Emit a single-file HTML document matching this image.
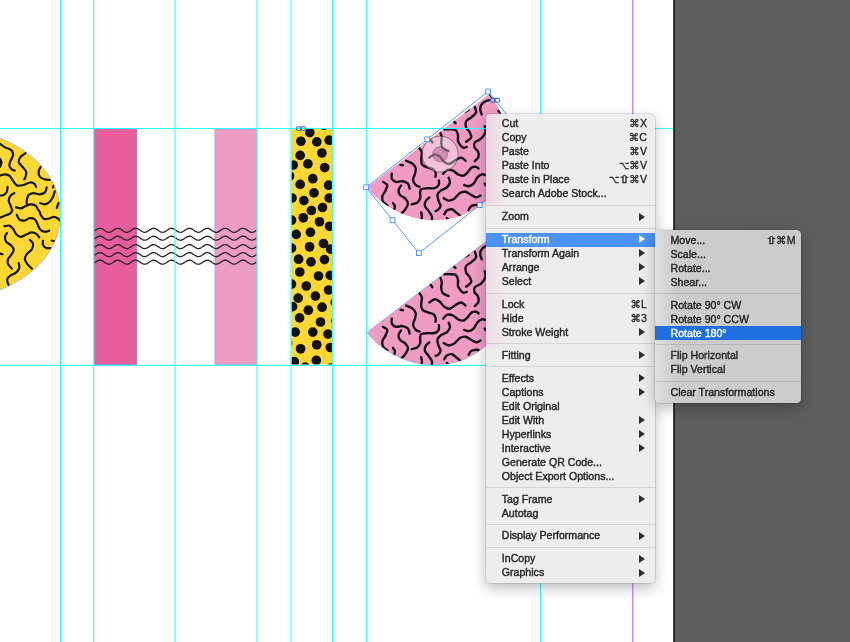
<!DOCTYPE html>
<html><head><meta charset="utf-8"><title>InDesign Transform Menu</title><style>
html,body{margin:0;padding:0}
body{width:850px;height:642px;overflow:hidden;position:relative;background:#5e5e5e;font-family:"Liberation Sans","DejaVu Sans",sans-serif}
#page{position:absolute;left:0;top:0;width:673px;height:642px;background:#fff}
#edge{position:absolute;left:673px;top:0;width:2px;height:642px;background:linear-gradient(90deg,#4a4a4a 0,#4a4a4a 50%,#1f1f1f 50%,#1f1f1f 100%)}
.menu{position:absolute;border-radius:4.5px;box-shadow:0 0 0 0.5px rgba(0,0,0,.18),0 5px 14px rgba(0,0,0,.27);overflow:hidden;font-size:10.6px;color:#262626;will-change:transform}
.m1{background:#ededed}
.m2{background:linear-gradient(90deg,#dedede 0,#d2d2d2 14px,#cccccc 22px,#cbcbcb 100%)}
.row{position:absolute;left:0;right:0;height:14px;line-height:14px;white-space:nowrap}
.row .lb{position:absolute;top:-0.5px;-webkit-text-stroke:0.4px currentColor}
.row .sc{position:absolute;top:-0.5px;-webkit-text-stroke:0.3px currentColor}
.sh{display:inline-block;transform:scaleX(1.5);margin:0 0 0 1.25px}
.op{display:inline-block;transform:scaleX(.83);margin-right:-0.9px}
.sep{position:absolute;left:0;right:0;height:1px;background:rgba(0,0,0,.09)}
.m2 .sep{background:rgba(0,0,0,.1)}
.hl{background:#4b91f7;color:#fff}
.hl2{background:#1f6fe3;color:#fff}
.arr{position:absolute;right:9.6px;top:2.9px;width:0;height:0;border-left:6.9px solid #2e2e2e;border-top:4.05px solid transparent;border-bottom:4.05px solid transparent}
.hl .arr{border-left-color:#fff}
.tint{position:absolute;left:-4px;width:26px;background:linear-gradient(90deg,rgba(240,150,200,.34),rgba(240,150,200,0));filter:blur(2.5px)}
</style></head>
<body>
<div id="page"></div><div id="edge"></div>
<svg width="850" height="642" viewBox="0 0 850 642" style="position:absolute;left:0;top:0">
<defs><clipPath id="cpage"><rect x="0" y="0" width="673" height="642"/></clipPath><clipPath id="cyrect"><rect x="291.5" y="128.6" width="40.5" height="235.8"/></clipPath><clipPath id="ccirc"><ellipse cx="-47.15" cy="214.0" rx="107.77" ry="84.28"/></clipPath><clipPath id="cshape"><path d="M366.9,332.4 L369.7,335.7 L372.7,338.8 L375.9,341.9 L379.2,344.7 L382.6,347.4 L386.1,349.9 L389.8,352.3 L393.5,354.4 L397.4,356.4 L401.3,358.2 L405.4,359.8 L409.4,361.2 L413.6,362.4 L417.7,363.3 L421.9,364.1 L426.1,364.6 L430.4,365.0 L434.6,365.1 L438.8,364.9 L442.9,364.6 L447.0,364.1 L451.1,363.3 L455.1,362.3 L459.1,361.2 L462.9,359.8 L466.7,358.2 L470.3,356.4 L473.8,354.4 L477.2,352.2 L480.5,349.9 L483.6,347.4 L486.6,344.7 L489.4,341.8 L492.1,338.8 L494.5,335.6 L496.8,332.3 L498.9,328.9 L500.8,325.4 L502.5,321.7 L504.0,318.0 L505.3,314.1 L506.4,310.2 L507.3,306.2 L507.9,302.2 L508.4,298.1 L508.6,294.0 L508.6,289.8 L508.3,285.7 L507.9,281.5 L507.2,277.4 L506.3,273.3 L505.2,269.2 L503.9,265.2 L502.4,261.2 L500.7,257.3 L498.8,253.4 L496.7,249.7 L494.4,246.0 L491.9,242.5 L489.4,238.9 Z"/></clipPath><g id="psq" fill="none" stroke="#161214" stroke-width="2.4" stroke-linecap="round" stroke-linejoin="round">
<path d="M400.5,309.9L403.0,310.2"/>
<path d="M406.1,305.6C407.1,306.1 410.7,307.2 412.3,308.4C413.9,309.7 415.3,311.2 415.7,313.1C416.1,314.9 415.3,317.4 414.8,319.3C414.4,321.2 412.9,322.5 413.0,324.3C413.1,326.0 414.4,328.4 415.5,329.6C416.6,330.9 418.9,331.4 419.6,331.7"/>
<path d="M419.3,292.9C419.8,293.6 421.6,295.5 421.9,297.5C422.2,299.5 421.0,302.9 421.1,305.0C421.2,307.0 421.4,308.7 422.6,309.9C423.7,311.2 426.1,311.7 427.9,312.4C429.7,313.2 432.2,313.3 433.5,314.3C434.8,315.3 435.5,317.2 435.8,318.4C436.1,319.7 435.5,321.2 435.4,321.8"/>
<path d="M391.8,318.7C391.8,319.5 391.0,322.3 391.8,323.6C392.5,325.0 394.4,326.3 396.1,326.8C397.9,327.2 400.4,325.8 402.4,326.1C404.3,326.4 406.8,327.4 408.0,328.6C409.2,329.9 409.3,332.8 409.6,333.6"/>
<path d="M383.1,326.8C383.7,327.3 386.7,328.4 387.2,329.9C387.6,331.3 386.3,333.6 385.5,335.5C384.8,337.4 382.8,339.2 382.4,341.1C382.0,343.0 382.2,345.1 383.1,346.7C383.9,348.3 386.7,349.8 387.4,350.4"/>
<path d="M401.1,330.5C400.7,331.2 398.8,333.3 398.6,334.9C398.4,336.4 398.7,338.4 399.9,339.8C401.0,341.3 404.1,342.1 405.5,343.6C406.8,345.0 408.1,346.7 408.0,348.6C407.9,350.4 405.9,353.2 404.9,354.8C403.8,356.4 402.3,357.4 401.7,357.9"/>
<path d="M393.0,347.9C393.3,348.5 394.7,350.0 394.9,351.1C395.1,352.1 394.4,353.7 394.3,354.2"/>
<path d="M438.9,325.3C438.9,326.0 439.4,328.6 438.7,329.9C438.0,331.2 436.6,332.4 434.7,333.0C432.8,333.6 429.7,333.0 427.5,333.2C425.2,333.4 422.5,333.4 421.2,334.2C420.0,335.0 420.2,336.5 420.1,338.0C419.9,339.4 420.7,341.4 420.2,343.0C419.7,344.6 418.5,346.5 417.1,347.6C415.7,348.6 412.6,348.9 411.7,349.2"/>
<path d="M429.3,302.5C430.3,301.9 433.2,299.4 435.0,299.3C436.7,299.2 438.4,300.6 439.9,301.8C441.5,303.1 442.6,305.7 444.3,306.8C446.0,308.0 448.0,309.0 449.9,308.7C451.8,308.4 453.6,306.0 455.5,305.0C457.4,303.9 459.5,302.4 461.1,302.5C462.8,302.6 464.8,305.1 465.5,305.6"/>
<path d="M429.3,342.3C428.7,343.0 426.3,344.6 425.6,346.1C424.9,347.5 424.5,349.4 425.0,351.1C425.5,352.7 427.6,354.4 428.7,356.0C429.9,357.7 431.3,359.6 431.8,361.0C432.4,362.5 431.8,364.1 431.8,364.8"/>
<path d="M421.2,357.3C421.3,358.0 421.9,360.4 421.9,361.7C421.9,362.9 421.3,364.2 421.2,364.8"/>
<path d="M443.1,318.7C443.8,318.0 445.8,315.2 447.4,314.7C449.1,314.2 451.3,314.8 453.0,315.5C454.8,316.3 456.2,318.5 458.0,319.3C459.8,320.1 462.0,320.9 463.6,320.5C465.3,320.1 466.6,318.1 468.0,316.8C469.3,315.4 470.4,313.3 471.7,312.4C473.1,311.6 474.9,311.6 476.1,311.8C477.2,312.0 478.2,313.2 478.6,313.4"/>
<path d="M448.7,322.6C448.9,323.4 450.2,325.8 449.9,327.4C449.6,329.0 448.3,331.0 446.8,332.4C445.2,333.7 442.1,334.2 440.6,335.5C439.0,336.7 437.8,338.1 437.4,339.8C437.1,341.6 438.2,344.3 438.7,346.1C439.2,347.8 440.6,349.1 440.6,350.4C440.6,351.8 439.5,353.2 438.7,354.2C437.9,355.1 436.1,355.7 435.6,356.0"/>
<path d="M464.2,329.9C465.0,330.1 467.0,331.3 468.6,331.1C470.2,330.9 472.1,330.1 473.6,328.6C475.0,327.2 476.0,324.0 477.3,322.4C478.7,320.8 480.3,319.7 481.7,319.3C483.0,318.9 484.8,319.8 485.4,319.9"/>
<path d="M484.8,328.6L485.4,329.9"/>
<path d="M443.7,343.0C444.5,343.4 446.9,345.3 448.7,345.5C450.4,345.6 452.4,344.8 454.3,343.6C456.1,342.3 458.0,339.1 459.9,338.0C461.7,336.8 463.6,336.4 465.5,336.7C467.4,337.0 469.3,338.9 471.1,339.8C472.9,340.8 474.5,342.2 476.1,342.3C477.6,342.4 479.7,340.8 480.4,340.5"/>
<path d="M444.3,359.2C444.7,358.5 445.5,356.3 446.8,355.4C448.0,354.6 450.2,353.9 451.8,354.2C453.3,354.5 454.7,356.1 456.1,357.3C457.6,358.4 459.8,360.4 460.5,361.0"/>
<path d="M468.6,354.8C469.0,354.2 469.9,351.9 471.1,351.1C472.2,350.2 474.2,350.0 475.5,349.8C476.7,349.6 478.0,350.0 478.6,350.1"/>
<path d="M446.8,362.9L448.0,364.1"/>
<path d="M474.8,251.8C475.0,252.7 476.7,255.6 476.0,257.4C475.4,259.2 472.7,260.9 471.1,262.4C469.4,263.8 466.9,264.5 466.1,266.1C465.2,267.8 465.5,270.5 466.1,272.4C466.7,274.2 469.0,275.7 469.8,277.3C470.6,279.0 471.7,280.8 471.1,282.3C470.4,283.9 466.9,286.0 466.1,286.7"/>
<path d="M488.9,245.1C488.1,245.4 485.5,246.1 484.2,247.0C482.9,247.9 481.4,249.5 480.8,250.8C480.2,252.1 480.2,253.6 480.3,255.0C480.4,256.4 481.5,258.6 481.7,259.3"/>
<path d="M464.8,256.8L468.6,254.9"/>
<path d="M453.6,266.1L455.5,268.0"/>
<path d="M430.6,284.8L432.4,287.3"/>
<path d="M440.5,278.0C440.7,278.7 441.7,280.8 441.8,282.3C441.9,283.9 441.0,285.5 441.2,287.3C441.3,289.1 441.4,291.5 442.6,292.9C443.9,294.4 447.6,295.5 448.6,296.0"/>
<path d="M444.3,274.2C445.2,274.2 448.0,274.1 449.9,274.2C451.7,274.3 454.1,273.9 455.5,274.8C456.8,275.8 457.6,278.0 458.0,279.8C458.4,281.7 457.5,284.2 458.0,286.1C458.5,287.9 460.2,289.9 461.1,291.0C462.0,292.1 462.6,292.5 463.6,292.7C464.5,292.8 466.2,292.0 466.7,291.9"/>
<path d="M484.8,271.1C484.9,272.1 486.0,275.3 485.4,277.3C484.8,279.4 482.8,281.9 481.0,283.6C479.3,285.2 475.9,285.9 474.8,287.3C473.7,288.8 474.0,290.8 474.5,292.3C475.1,293.8 477.2,294.6 477.9,296.2C478.6,297.7 479.1,300.1 478.5,301.8C478.0,303.4 475.4,305.4 474.8,306.1"/>
<path d="M489.9,239.0L491.6,241.8"/>
<path d="M498.4,256.0L500.2,257.4"/>
</g></defs>
<g clip-path="url(#cpage)">
<ellipse cx="-47.15" cy="214.0" rx="107.77" ry="84.28" fill="#fdd835" stroke="#7a9be0" stroke-width="0.6"/>
<g clip-path="url(#ccirc)" fill="none" stroke="#1a1712" stroke-width="2.2" stroke-linecap="round">
<path d="M0.0,143.8C0.9,144.5 3.7,146.5 5.6,147.6C7.5,148.6 10.0,148.8 11.2,150.1C12.5,151.3 13.2,153.3 13.1,155.1C13.0,156.8 11.2,158.9 10.6,160.7C10.0,162.4 9.1,164.2 9.3,165.6C9.6,167.1 10.9,168.6 11.8,169.4C12.7,170.2 14.2,170.4 14.7,170.6"/>
<path d="M0.0,158.8C0.2,159.4 1.5,161.2 1.5,162.5C1.5,163.9 0.2,166.2 0.0,166.9"/>
<path d="M-0.2,159.5C-0.1,160.1 0.2,161.8 0.2,163.0C0.2,164.2 -0.1,165.9 -0.2,166.5"/>
<path d="M25.5,153.2C24.7,153.8 21.7,155.5 20.6,156.9C19.4,158.4 18.3,160.1 18.7,161.9C19.1,163.7 21.8,165.9 23.1,167.5C24.3,169.2 25.8,170.3 26.2,171.9C26.6,173.4 25.9,175.6 25.5,176.9C25.2,178.1 24.5,178.9 24.3,179.4"/>
<path d="M40.5,166.9C40.2,167.7 38.7,170.2 38.6,171.9C38.5,173.5 38.8,175.6 39.9,176.9C40.9,178.1 43.2,178.8 44.9,179.4C46.5,179.9 49.0,179.9 49.8,180.0"/>
<path d="M0.0,175.6C0.8,175.4 3.3,174.3 5.0,174.4C6.6,174.5 8.5,175.0 10.0,176.2C11.4,177.5 12.5,180.3 13.7,181.8C15.0,183.4 15.8,185.1 17.4,185.6C19.1,186.1 21.6,185.5 23.7,185.0C25.8,184.4 28.1,182.7 29.9,182.5C31.7,182.3 33.2,183.0 34.3,183.7C35.3,184.4 35.8,186.3 36.1,186.8"/>
<path d="M7.5,186.8C7.4,187.7 7.5,190.5 6.9,191.8C6.2,193.2 4.9,194.3 3.7,194.9C2.6,195.6 0.6,195.4 0.0,195.6"/>
<path d="M14.3,193.1C13.7,193.5 11.5,194.3 10.6,195.6C9.7,196.8 8.7,198.9 8.7,200.5C8.7,202.2 10.1,204.1 10.6,205.5C11.1,207.0 11.6,208.4 11.8,209.3C12.1,210.1 12.5,209.9 12.2,210.6C11.9,211.4 11.2,212.9 10.0,213.7C8.8,214.6 6.6,214.9 5.0,215.6C3.3,216.3 0.8,217.4 0.0,217.7"/>
<path d="M46.7,187.5C46.4,188.3 46.0,191.3 44.9,192.4C43.7,193.6 41.7,194.2 39.9,194.3C38.0,194.4 35.5,193.0 33.6,193.1C31.8,193.2 29.8,193.8 28.7,194.9C27.5,196.1 27.1,198.4 26.8,199.9C26.5,201.5 26.8,203.5 26.8,204.3"/>
<path d="M53.6,185.6L53.0,187.5"/>
<path d="M54.8,191.2C54.5,192.1 53.8,195.0 53.0,196.8C52.1,198.6 51.2,200.5 49.8,201.8C48.5,203.0 46.5,204.1 44.9,204.3C43.2,204.5 40.7,203.2 39.9,203.0"/>
<path d="M16.0,207.3C16.8,207.4 19.6,208.4 21.2,208.3C22.8,208.1 24.0,206.8 25.5,206.1C27.1,205.5 28.9,204.4 30.5,204.3C32.2,204.2 34.3,204.7 35.5,205.5C36.8,206.4 37.3,208.2 38.0,209.3C38.7,210.3 39.1,210.7 39.6,211.7C40.1,212.8 40.4,214.4 41.1,215.6C41.9,216.8 42.9,218.5 44.2,219.0C45.6,219.4 47.6,218.8 49.2,218.5C50.8,218.1 52.4,216.9 53.8,216.9C55.3,216.9 57.0,217.9 57.9,218.5C58.9,219.0 59.3,219.9 59.6,220.2"/>
<path d="M58.6,203.0L56.7,208.0"/>
<path d="M16.8,215.0C17.2,215.7 18.1,218.4 19.3,219.3C20.6,220.3 22.5,220.8 24.3,220.6C26.1,220.4 28.1,218.3 29.9,218.1C31.7,217.9 33.6,218.4 34.9,219.3C36.1,220.3 36.6,222.0 37.4,223.7C38.2,225.4 38.6,228.0 39.9,229.3C41.1,230.7 43.3,231.6 44.9,231.8C46.4,232.0 48.5,230.8 49.2,230.6"/>
<path d="M4.4,226.2C5.2,226.1 7.9,225.2 9.3,225.6C10.8,226.0 11.9,227.2 13.1,228.7C14.2,230.1 15.0,232.9 16.2,234.3C17.4,235.6 19.0,236.7 20.6,236.8C22.1,236.9 23.8,235.6 25.5,234.9C27.3,234.2 29.4,232.6 31.2,232.4C32.9,232.2 34.8,232.8 36.1,233.7C37.5,234.5 38.7,236.8 39.3,237.4"/>
<path d="M6.9,233.1C6.5,233.7 5.1,235.3 5.0,236.8C4.9,238.2 5.2,240.3 6.2,241.8C7.3,243.2 10.0,244.2 11.2,245.5C12.5,246.9 13.7,248.3 13.7,249.9C13.7,251.4 12.1,253.3 11.2,254.9C10.3,256.4 8.6,257.7 8.1,259.2C7.6,260.8 7.5,262.6 8.1,264.2C8.7,265.8 11.2,267.8 11.8,268.6"/>
<path d="M29.9,239.9C30.4,240.5 32.7,242.1 33.0,243.6C33.3,245.2 32.8,247.5 31.8,249.3C30.7,251.0 27.9,252.6 26.8,254.2C25.6,255.9 24.8,257.6 24.9,259.2C25.0,260.9 26.3,262.6 27.4,264.2C28.6,265.8 31.0,267.8 31.8,268.6"/>
<path d="M43.0,240.5C43.0,241.3 42.5,243.6 43.0,244.9C43.5,246.1 44.9,247.5 46.1,248.0C47.4,248.5 49.7,248.0 50.5,248.0"/>
<path d="M51.7,240.5L54.2,241.2"/>
<path d="M0.0,253.6L2.5,254.2"/>
<path d="M18.7,263.0C18.8,263.8 19.7,266.4 19.3,267.9C18.9,269.5 17.7,271.1 16.2,272.3C14.7,273.6 12.0,274.4 10.6,275.4C9.1,276.5 8.0,277.4 7.5,278.5C7.0,279.7 7.3,281.2 7.5,282.3C7.7,283.3 8.5,284.4 8.7,284.8"/>
</g>
<rect x="94.4" y="129" width="42.4" height="235.7" fill="#e85d9b" stroke="#6f7fd0" stroke-width="0.6"/>
<rect x="214.9" y="129" width="41.8" height="235.7" fill="#ef9cc3" stroke="#8f9fe0" stroke-width="0.6"/>
<path d="M94.5,231.01 L95.5,230.32 L96.5,229.63 L97.5,229.02 L98.5,228.57 L99.5,228.33 L100.5,228.33 L101.5,228.57 L102.5,229.02 L103.5,229.63 L104.5,230.32 L105.5,231.01 L106.5,231.61 L107.5,232.05 L108.5,232.28 L109.5,232.26 L110.5,232.01 L111.5,231.54 L112.5,230.93 L113.5,230.23 L114.5,229.55 L115.5,228.96 L116.5,228.53 L117.5,228.32 L118.5,228.35 L119.5,228.62 L120.5,229.09 L121.5,229.72 L122.5,230.41 L123.5,231.09 L124.5,231.67 L125.5,232.09 L126.5,232.29 L127.5,232.24 L128.5,231.96 L129.5,231.47 L130.5,230.84 L131.5,230.15 L132.5,229.47 L133.5,228.89 L134.5,228.49 L135.5,228.31 L136.5,228.37 L137.5,228.67 L138.5,229.16 L139.5,229.80 L140.5,230.50 L141.5,231.17 L142.5,231.74 L143.5,232.13 L144.5,232.30 L145.5,232.22 L146.5,231.91 L147.5,231.40 L148.5,230.76 L149.5,230.06 L150.5,229.39 L151.5,228.83 L152.5,228.45 L153.5,228.30 L154.5,228.39 L155.5,228.72 L156.5,229.24 L157.5,229.89 L158.5,230.58 L159.5,231.25 L160.5,231.80 L161.5,232.16 L162.5,232.30 L163.5,232.19 L164.5,231.85 L165.5,231.33 L166.5,230.67 L167.5,229.97 L168.5,229.31 L169.5,228.77 L170.5,228.42 L171.5,228.30 L172.5,228.42 L173.5,228.77 L174.5,229.31 L175.5,229.97 L176.5,230.67 L177.5,231.33 L178.5,231.85 L179.5,232.19 L180.5,232.30 L181.5,232.16 L182.5,231.80 L183.5,231.25 L184.5,230.58 L185.5,229.89 L186.5,229.24 L187.5,228.72 L188.5,228.39 L189.5,228.30 L190.5,228.45 L191.5,228.83 L192.5,229.39 L193.5,230.06 L194.5,230.76 L195.5,231.40 L196.5,231.91 L197.5,232.22 L198.5,232.30 L199.5,232.13 L200.5,231.74 L201.5,231.17 L202.5,230.50 L203.5,229.80 L204.5,229.16 L205.5,228.67 L206.5,228.37 L207.5,228.31 L208.5,228.49 L209.5,228.89 L210.5,229.47 L211.5,230.15 L212.5,230.84 L213.5,231.47 L214.5,231.96 L215.5,232.24 L216.5,232.29 L217.5,232.09 L218.5,231.67 L219.5,231.09 L220.5,230.41 L221.5,229.72 L222.5,229.09 L223.5,228.62 L224.5,228.35 L225.5,228.32 L226.5,228.53 L227.5,228.96 L228.5,229.55 L229.5,230.23 L230.5,230.93 L231.5,231.54 L232.5,232.01 L233.5,232.26 L234.5,232.28 L235.5,232.05 L236.5,231.61 L237.5,231.01 L238.5,230.32 L239.5,229.63 L240.5,229.02 L241.5,228.57 L242.5,228.33 L243.5,228.33 L244.5,228.57 L245.5,229.02 L246.5,229.63 L247.5,230.32 L248.5,231.01 L249.5,231.61 L250.5,232.05 L251.5,232.28 L252.5,232.26 L253.5,232.01 L254.5,231.54 L255.5,230.93 L256.5,230.23" fill="none" stroke="#242424" stroke-width="1.3"/>
<path d="M94.5,238.91 L95.5,238.22 L96.5,237.53 L97.5,236.92 L98.5,236.47 L99.5,236.23 L100.5,236.23 L101.5,236.47 L102.5,236.92 L103.5,237.53 L104.5,238.22 L105.5,238.91 L106.5,239.51 L107.5,239.95 L108.5,240.18 L109.5,240.16 L110.5,239.91 L111.5,239.44 L112.5,238.83 L113.5,238.13 L114.5,237.45 L115.5,236.86 L116.5,236.43 L117.5,236.22 L118.5,236.25 L119.5,236.52 L120.5,236.99 L121.5,237.62 L122.5,238.31 L123.5,238.99 L124.5,239.57 L125.5,239.99 L126.5,240.19 L127.5,240.14 L128.5,239.86 L129.5,239.37 L130.5,238.74 L131.5,238.05 L132.5,237.37 L133.5,236.79 L134.5,236.39 L135.5,236.21 L136.5,236.27 L137.5,236.57 L138.5,237.06 L139.5,237.70 L140.5,238.40 L141.5,239.07 L142.5,239.64 L143.5,240.03 L144.5,240.20 L145.5,240.12 L146.5,239.81 L147.5,239.30 L148.5,238.66 L149.5,237.96 L150.5,237.29 L151.5,236.73 L152.5,236.35 L153.5,236.20 L154.5,236.29 L155.5,236.62 L156.5,237.14 L157.5,237.79 L158.5,238.48 L159.5,239.15 L160.5,239.70 L161.5,240.06 L162.5,240.20 L163.5,240.09 L164.5,239.75 L165.5,239.23 L166.5,238.57 L167.5,237.87 L168.5,237.21 L169.5,236.67 L170.5,236.32 L171.5,236.20 L172.5,236.32 L173.5,236.67 L174.5,237.21 L175.5,237.87 L176.5,238.57 L177.5,239.23 L178.5,239.75 L179.5,240.09 L180.5,240.20 L181.5,240.06 L182.5,239.70 L183.5,239.15 L184.5,238.48 L185.5,237.79 L186.5,237.14 L187.5,236.62 L188.5,236.29 L189.5,236.20 L190.5,236.35 L191.5,236.73 L192.5,237.29 L193.5,237.96 L194.5,238.66 L195.5,239.30 L196.5,239.81 L197.5,240.12 L198.5,240.20 L199.5,240.03 L200.5,239.64 L201.5,239.07 L202.5,238.40 L203.5,237.70 L204.5,237.06 L205.5,236.57 L206.5,236.27 L207.5,236.21 L208.5,236.39 L209.5,236.79 L210.5,237.37 L211.5,238.05 L212.5,238.74 L213.5,239.37 L214.5,239.86 L215.5,240.14 L216.5,240.19 L217.5,239.99 L218.5,239.57 L219.5,238.99 L220.5,238.31 L221.5,237.62 L222.5,236.99 L223.5,236.52 L224.5,236.25 L225.5,236.22 L226.5,236.43 L227.5,236.86 L228.5,237.45 L229.5,238.13 L230.5,238.83 L231.5,239.44 L232.5,239.91 L233.5,240.16 L234.5,240.18 L235.5,239.95 L236.5,239.51 L237.5,238.91 L238.5,238.22 L239.5,237.53 L240.5,236.92 L241.5,236.47 L242.5,236.23 L243.5,236.23 L244.5,236.47 L245.5,236.92 L246.5,237.53 L247.5,238.22 L248.5,238.91 L249.5,239.51 L250.5,239.95 L251.5,240.18 L252.5,240.16 L253.5,239.91 L254.5,239.44 L255.5,238.83 L256.5,238.13" fill="none" stroke="#242424" stroke-width="1.3"/>
<path d="M94.5,247.31 L95.5,246.62 L96.5,245.93 L97.5,245.32 L98.5,244.87 L99.5,244.63 L100.5,244.63 L101.5,244.87 L102.5,245.32 L103.5,245.93 L104.5,246.62 L105.5,247.31 L106.5,247.91 L107.5,248.35 L108.5,248.58 L109.5,248.56 L110.5,248.31 L111.5,247.84 L112.5,247.23 L113.5,246.53 L114.5,245.85 L115.5,245.26 L116.5,244.83 L117.5,244.62 L118.5,244.65 L119.5,244.92 L120.5,245.39 L121.5,246.02 L122.5,246.71 L123.5,247.39 L124.5,247.97 L125.5,248.39 L126.5,248.59 L127.5,248.54 L128.5,248.26 L129.5,247.77 L130.5,247.14 L131.5,246.45 L132.5,245.77 L133.5,245.19 L134.5,244.79 L135.5,244.61 L136.5,244.67 L137.5,244.97 L138.5,245.46 L139.5,246.10 L140.5,246.80 L141.5,247.47 L142.5,248.04 L143.5,248.43 L144.5,248.60 L145.5,248.52 L146.5,248.21 L147.5,247.70 L148.5,247.06 L149.5,246.36 L150.5,245.69 L151.5,245.13 L152.5,244.75 L153.5,244.60 L154.5,244.69 L155.5,245.02 L156.5,245.54 L157.5,246.19 L158.5,246.88 L159.5,247.55 L160.5,248.10 L161.5,248.46 L162.5,248.60 L163.5,248.49 L164.5,248.15 L165.5,247.63 L166.5,246.97 L167.5,246.27 L168.5,245.61 L169.5,245.07 L170.5,244.72 L171.5,244.60 L172.5,244.72 L173.5,245.07 L174.5,245.61 L175.5,246.27 L176.5,246.97 L177.5,247.63 L178.5,248.15 L179.5,248.49 L180.5,248.60 L181.5,248.46 L182.5,248.10 L183.5,247.55 L184.5,246.88 L185.5,246.19 L186.5,245.54 L187.5,245.02 L188.5,244.69 L189.5,244.60 L190.5,244.75 L191.5,245.13 L192.5,245.69 L193.5,246.36 L194.5,247.06 L195.5,247.70 L196.5,248.21 L197.5,248.52 L198.5,248.60 L199.5,248.43 L200.5,248.04 L201.5,247.47 L202.5,246.80 L203.5,246.10 L204.5,245.46 L205.5,244.97 L206.5,244.67 L207.5,244.61 L208.5,244.79 L209.5,245.19 L210.5,245.77 L211.5,246.45 L212.5,247.14 L213.5,247.77 L214.5,248.26 L215.5,248.54 L216.5,248.59 L217.5,248.39 L218.5,247.97 L219.5,247.39 L220.5,246.71 L221.5,246.02 L222.5,245.39 L223.5,244.92 L224.5,244.65 L225.5,244.62 L226.5,244.83 L227.5,245.26 L228.5,245.85 L229.5,246.53 L230.5,247.23 L231.5,247.84 L232.5,248.31 L233.5,248.56 L234.5,248.58 L235.5,248.35 L236.5,247.91 L237.5,247.31 L238.5,246.62 L239.5,245.93 L240.5,245.32 L241.5,244.87 L242.5,244.63 L243.5,244.63 L244.5,244.87 L245.5,245.32 L246.5,245.93 L247.5,246.62 L248.5,247.31 L249.5,247.91 L250.5,248.35 L251.5,248.58 L252.5,248.56 L253.5,248.31 L254.5,247.84 L255.5,247.23 L256.5,246.53" fill="none" stroke="#242424" stroke-width="1.3"/>
<path d="M94.5,255.31 L95.5,254.62 L96.5,253.93 L97.5,253.32 L98.5,252.87 L99.5,252.63 L100.5,252.63 L101.5,252.87 L102.5,253.32 L103.5,253.93 L104.5,254.62 L105.5,255.31 L106.5,255.91 L107.5,256.35 L108.5,256.58 L109.5,256.56 L110.5,256.31 L111.5,255.84 L112.5,255.23 L113.5,254.53 L114.5,253.85 L115.5,253.26 L116.5,252.83 L117.5,252.62 L118.5,252.65 L119.5,252.92 L120.5,253.39 L121.5,254.02 L122.5,254.71 L123.5,255.39 L124.5,255.97 L125.5,256.39 L126.5,256.59 L127.5,256.54 L128.5,256.26 L129.5,255.77 L130.5,255.14 L131.5,254.45 L132.5,253.77 L133.5,253.19 L134.5,252.79 L135.5,252.61 L136.5,252.67 L137.5,252.97 L138.5,253.46 L139.5,254.10 L140.5,254.80 L141.5,255.47 L142.5,256.04 L143.5,256.43 L144.5,256.60 L145.5,256.52 L146.5,256.21 L147.5,255.70 L148.5,255.06 L149.5,254.36 L150.5,253.69 L151.5,253.13 L152.5,252.75 L153.5,252.60 L154.5,252.69 L155.5,253.02 L156.5,253.54 L157.5,254.19 L158.5,254.88 L159.5,255.55 L160.5,256.10 L161.5,256.46 L162.5,256.60 L163.5,256.49 L164.5,256.15 L165.5,255.63 L166.5,254.97 L167.5,254.27 L168.5,253.61 L169.5,253.07 L170.5,252.72 L171.5,252.60 L172.5,252.72 L173.5,253.07 L174.5,253.61 L175.5,254.27 L176.5,254.97 L177.5,255.63 L178.5,256.15 L179.5,256.49 L180.5,256.60 L181.5,256.46 L182.5,256.10 L183.5,255.55 L184.5,254.88 L185.5,254.19 L186.5,253.54 L187.5,253.02 L188.5,252.69 L189.5,252.60 L190.5,252.75 L191.5,253.13 L192.5,253.69 L193.5,254.36 L194.5,255.06 L195.5,255.70 L196.5,256.21 L197.5,256.52 L198.5,256.60 L199.5,256.43 L200.5,256.04 L201.5,255.47 L202.5,254.80 L203.5,254.10 L204.5,253.46 L205.5,252.97 L206.5,252.67 L207.5,252.61 L208.5,252.79 L209.5,253.19 L210.5,253.77 L211.5,254.45 L212.5,255.14 L213.5,255.77 L214.5,256.26 L215.5,256.54 L216.5,256.59 L217.5,256.39 L218.5,255.97 L219.5,255.39 L220.5,254.71 L221.5,254.02 L222.5,253.39 L223.5,252.92 L224.5,252.65 L225.5,252.62 L226.5,252.83 L227.5,253.26 L228.5,253.85 L229.5,254.53 L230.5,255.23 L231.5,255.84 L232.5,256.31 L233.5,256.56 L234.5,256.58 L235.5,256.35 L236.5,255.91 L237.5,255.31 L238.5,254.62 L239.5,253.93 L240.5,253.32 L241.5,252.87 L242.5,252.63 L243.5,252.63 L244.5,252.87 L245.5,253.32 L246.5,253.93 L247.5,254.62 L248.5,255.31 L249.5,255.91 L250.5,256.35 L251.5,256.58 L252.5,256.56 L253.5,256.31 L254.5,255.84 L255.5,255.23 L256.5,254.53" fill="none" stroke="#242424" stroke-width="1.3"/>
<path d="M94.5,262.91 L95.5,262.22 L96.5,261.53 L97.5,260.92 L98.5,260.47 L99.5,260.23 L100.5,260.23 L101.5,260.47 L102.5,260.92 L103.5,261.53 L104.5,262.22 L105.5,262.91 L106.5,263.51 L107.5,263.95 L108.5,264.18 L109.5,264.16 L110.5,263.91 L111.5,263.44 L112.5,262.83 L113.5,262.13 L114.5,261.45 L115.5,260.86 L116.5,260.43 L117.5,260.22 L118.5,260.25 L119.5,260.52 L120.5,260.99 L121.5,261.62 L122.5,262.31 L123.5,262.99 L124.5,263.57 L125.5,263.99 L126.5,264.19 L127.5,264.14 L128.5,263.86 L129.5,263.37 L130.5,262.74 L131.5,262.05 L132.5,261.37 L133.5,260.79 L134.5,260.39 L135.5,260.21 L136.5,260.27 L137.5,260.57 L138.5,261.06 L139.5,261.70 L140.5,262.40 L141.5,263.07 L142.5,263.64 L143.5,264.03 L144.5,264.20 L145.5,264.12 L146.5,263.81 L147.5,263.30 L148.5,262.66 L149.5,261.96 L150.5,261.29 L151.5,260.73 L152.5,260.35 L153.5,260.20 L154.5,260.29 L155.5,260.62 L156.5,261.14 L157.5,261.79 L158.5,262.48 L159.5,263.15 L160.5,263.70 L161.5,264.06 L162.5,264.20 L163.5,264.09 L164.5,263.75 L165.5,263.23 L166.5,262.57 L167.5,261.87 L168.5,261.21 L169.5,260.67 L170.5,260.32 L171.5,260.20 L172.5,260.32 L173.5,260.67 L174.5,261.21 L175.5,261.87 L176.5,262.57 L177.5,263.23 L178.5,263.75 L179.5,264.09 L180.5,264.20 L181.5,264.06 L182.5,263.70 L183.5,263.15 L184.5,262.48 L185.5,261.79 L186.5,261.14 L187.5,260.62 L188.5,260.29 L189.5,260.20 L190.5,260.35 L191.5,260.73 L192.5,261.29 L193.5,261.96 L194.5,262.66 L195.5,263.30 L196.5,263.81 L197.5,264.12 L198.5,264.20 L199.5,264.03 L200.5,263.64 L201.5,263.07 L202.5,262.40 L203.5,261.70 L204.5,261.06 L205.5,260.57 L206.5,260.27 L207.5,260.21 L208.5,260.39 L209.5,260.79 L210.5,261.37 L211.5,262.05 L212.5,262.74 L213.5,263.37 L214.5,263.86 L215.5,264.14 L216.5,264.19 L217.5,263.99 L218.5,263.57 L219.5,262.99 L220.5,262.31 L221.5,261.62 L222.5,260.99 L223.5,260.52 L224.5,260.25 L225.5,260.22 L226.5,260.43 L227.5,260.86 L228.5,261.45 L229.5,262.13 L230.5,262.83 L231.5,263.44 L232.5,263.91 L233.5,264.16 L234.5,264.18 L235.5,263.95 L236.5,263.51 L237.5,262.91 L238.5,262.22 L239.5,261.53 L240.5,260.92 L241.5,260.47 L242.5,260.23 L243.5,260.23 L244.5,260.47 L245.5,260.92 L246.5,261.53 L247.5,262.22 L248.5,262.91 L249.5,263.51 L250.5,263.95 L251.5,264.18 L252.5,264.16 L253.5,263.91 L254.5,263.44 L255.5,262.83 L256.5,262.13" fill="none" stroke="#242424" stroke-width="1.3"/>
<rect x="291.5" y="128.6" width="40.5" height="235.8" fill="#fdd835"/>
<g clip-path="url(#cyrect)" fill="#14110f">
<circle cx="309.8" cy="132.6" r="4.85"/>
<circle cx="323.8" cy="125.2" r="4.85"/>
<circle cx="300.9" cy="141.3" r="4.85"/>
<circle cx="316.8" cy="141.9" r="4.85"/>
<circle cx="329.2" cy="140.2" r="4.85"/>
<circle cx="321.9" cy="153" r="4.85"/>
<circle cx="300.2" cy="155.4" r="4.85"/>
<circle cx="307.9" cy="163.9" r="4.85"/>
<circle cx="293.2" cy="165" r="4.85"/>
<circle cx="324.7" cy="167.6" r="4.85"/>
<circle cx="312.8" cy="178.7" r="4.85"/>
<circle cx="289.6" cy="176" r="4.85"/>
<circle cx="300.2" cy="184.4" r="4.85"/>
<circle cx="328.6" cy="185.2" r="4.85"/>
<circle cx="314" cy="192.9" r="4.85"/>
<circle cx="292" cy="198" r="4.85"/>
<circle cx="303.9" cy="200.6" r="4.85"/>
<circle cx="329.2" cy="198" r="4.85"/>
<circle cx="322.5" cy="207.5" r="4.85"/>
<circle cx="311.4" cy="210.5" r="4.85"/>
<circle cx="303.3" cy="217.8" r="4.85"/>
<circle cx="291.5" cy="220.2" r="4.85"/>
<circle cx="319.5" cy="221.8" r="4.85"/>
<circle cx="329.6" cy="226.3" r="4.85"/>
<circle cx="310.4" cy="232.3" r="4.85"/>
<circle cx="296.2" cy="234.4" r="4.85"/>
<circle cx="323.5" cy="243.5" r="4.85"/>
<circle cx="309.6" cy="246.8" r="4.85"/>
<circle cx="291.5" cy="248.1" r="4.85"/>
<circle cx="330.6" cy="249.1" r="4.85"/>
<circle cx="298.6" cy="259.2" r="4.85"/>
<circle cx="311" cy="261.9" r="4.85"/>
<circle cx="324.5" cy="259.6" r="4.85"/>
<circle cx="299.8" cy="272" r="4.85"/>
<circle cx="318.5" cy="276" r="4.85"/>
<circle cx="330.2" cy="275.4" r="4.85"/>
<circle cx="291.5" cy="284.1" r="4.85"/>
<circle cx="306.3" cy="286" r="4.85"/>
<circle cx="328.6" cy="290" r="4.85"/>
<circle cx="298.2" cy="298.1" r="4.85"/>
<circle cx="315.4" cy="296.1" r="4.85"/>
<circle cx="292.6" cy="306.6" r="4.85"/>
<circle cx="308.3" cy="310.2" r="4.85"/>
<circle cx="322.1" cy="307.2" r="4.85"/>
<circle cx="335.3" cy="302.2" r="4.85"/>
<circle cx="299.6" cy="317.9" r="4.85"/>
<circle cx="320.5" cy="322" r="4.85"/>
<circle cx="336" cy="320.7" r="4.85"/>
<circle cx="295.2" cy="332.1" r="4.85"/>
<circle cx="312.8" cy="332.1" r="4.85"/>
<circle cx="328" cy="334.1" r="4.85"/>
<circle cx="300.6" cy="348.8" r="4.85"/>
<circle cx="316.7" cy="344.8" r="4.85"/>
<circle cx="330.3" cy="347.5" r="4.85"/>
<circle cx="294.3" cy="361.7" r="4.85"/>
<circle cx="316.3" cy="360.4" r="4.85"/>
<circle cx="305.2" cy="367.2" r="4.85"/>
<circle cx="287.6" cy="343" r="4.85"/>
<circle cx="331" cy="368" r="4.85"/>
</g>
<path d="M366.9,332.4 L369.7,335.7 L372.7,338.8 L375.9,341.9 L379.2,344.7 L382.6,347.4 L386.1,349.9 L389.8,352.3 L393.5,354.4 L397.4,356.4 L401.3,358.2 L405.4,359.8 L409.4,361.2 L413.6,362.4 L417.7,363.3 L421.9,364.1 L426.1,364.6 L430.4,365.0 L434.6,365.1 L438.8,364.9 L442.9,364.6 L447.0,364.1 L451.1,363.3 L455.1,362.3 L459.1,361.2 L462.9,359.8 L466.7,358.2 L470.3,356.4 L473.8,354.4 L477.2,352.2 L480.5,349.9 L483.6,347.4 L486.6,344.7 L489.4,341.8 L492.1,338.8 L494.5,335.6 L496.8,332.3 L498.9,328.9 L500.8,325.4 L502.5,321.7 L504.0,318.0 L505.3,314.1 L506.4,310.2 L507.3,306.2 L507.9,302.2 L508.4,298.1 L508.6,294.0 L508.6,289.8 L508.3,285.7 L507.9,281.5 L507.2,277.4 L506.3,273.3 L505.2,269.2 L503.9,265.2 L502.4,261.2 L500.7,257.3 L498.8,253.4 L496.7,249.7 L494.4,246.0 L491.9,242.5 L489.4,238.9 Z" fill="#ef9bc4" stroke="#7a9be0" stroke-width="0.6"/>
<g clip-path="url(#cshape)"><use href="#psq"/></g>
<g transform="translate(0,-144.9)"><path d="M366.9,332.4 L369.7,335.7 L372.7,338.8 L375.9,341.9 L379.2,344.7 L382.6,347.4 L386.1,349.9 L389.8,352.3 L393.5,354.4 L397.4,356.4 L401.3,358.2 L405.4,359.8 L409.4,361.2 L413.6,362.4 L417.7,363.3 L421.9,364.1 L426.1,364.6 L430.4,365.0 L434.6,365.1 L438.8,364.9 L442.9,364.6 L447.0,364.1 L451.1,363.3 L455.1,362.3 L459.1,361.2 L462.9,359.8 L466.7,358.2 L470.3,356.4 L473.8,354.4 L477.2,352.2 L480.5,349.9 L483.6,347.4 L486.6,344.7 L489.4,341.8 L492.1,338.8 L494.5,335.6 L496.8,332.3 L498.9,328.9 L500.8,325.4 L502.5,321.7 L504.0,318.0 L505.3,314.1 L506.4,310.2 L507.3,306.2 L507.9,302.2 L508.4,298.1 L508.6,294.0 L508.6,289.8 L508.3,285.7 L507.9,281.5 L507.2,277.4 L506.3,273.3 L505.2,269.2 L503.9,265.2 L502.4,261.2 L500.7,257.3 L498.8,253.4 L496.7,249.7 L494.4,246.0 L491.9,242.5 L489.4,238.9 Z" fill="#ef9bc4"/><g clip-path="url(#cshape)"><use href="#psq"/></g></g>
<circle cx="440.1" cy="154.2" r="18" fill="rgba(255,255,255,0.38)" stroke="rgba(40,30,40,0.6)" stroke-width="0.8"/>
<circle cx="440.1" cy="154.2" r="7.5" fill="rgba(150,50,110,0.35)" stroke="rgba(60,30,50,0.5)" stroke-width="0.7"/>
<rect x="59.98" y="0" width="1.1" height="642" fill="#32ffff"/>
<rect x="93.10" y="0" width="1.1" height="642" fill="#32ffff"/>
<rect x="174.45" y="0" width="1.1" height="642" fill="#32ffff"/>
<rect x="256.45" y="0" width="1.1" height="642" fill="#32ffff"/>
<rect x="290.42" y="0" width="1.1" height="642" fill="#32ffff"/>
<rect x="331.85" y="0" width="1.1" height="642" fill="#32ffff"/>
<rect x="365.85" y="0" width="1.1" height="642" fill="#32ffff"/>
<rect x="539.95" y="0" width="1.1" height="642" fill="#32ffff"/>
<rect x="0" y="127.95" width="673" height="1.1" fill="#32ffff"/>
<rect x="0" y="364.85" width="673" height="1.1" fill="#32ffff"/>
<rect x="632" y="0" width="1" height="642" fill="#c891ff"/><rect x="633" y="0" width="1" height="642" fill="#e6ccff"/>
<path d="M366.2,187.3 L488.2,91.5 L540.7,157.0 L418.9,253.1 Z" fill="none" stroke="#4a8cff" stroke-width="0.9"/>
<rect x="363.8" y="184.9" width="4.8" height="4.8" fill="#fff" stroke="#4a8cff" stroke-width="0.9"/>
<rect x="485.8" y="89.1" width="4.8" height="4.8" fill="#fff" stroke="#4a8cff" stroke-width="0.9"/>
<rect x="416.5" y="250.7" width="4.8" height="4.8" fill="#fff" stroke="#4a8cff" stroke-width="0.9"/>
<rect x="538.3" y="154.6" width="4.8" height="4.8" fill="#fff" stroke="#4a8cff" stroke-width="0.9"/>
<rect x="424.8" y="137.0" width="4.8" height="4.8" fill="#fff" stroke="#4a8cff" stroke-width="0.9"/>
<rect x="390.1" y="217.8" width="4.8" height="4.8" fill="#fff" stroke="#4a8cff" stroke-width="0.9"/>
<rect x="477.4" y="202.7" width="4.8" height="4.8" fill="#fff" stroke="#4a8cff" stroke-width="0.9"/>
<rect x="512.1" y="121.8" width="4.8" height="4.8" fill="#fff" stroke="#4a8cff" stroke-width="0.9"/>
<g fill="none" stroke="#2f6fd6" stroke-width="1.1"><rect x="296.3" y="126.7" width="5.2" height="3.8" rx="1.9"/><rect x="300.5" y="126.7" width="5.2" height="3.8" rx="1.9"/></g>
<g fill="none" stroke="#2f6fd6" stroke-width="1.1"><rect x="490.3" y="98.4" width="5.2" height="3.8" rx="1.9"/><rect x="494.5" y="98.4" width="5.2" height="3.8" rx="1.9"/></g>
</g></svg>
<div class="menu m1" style="left:486.4px;top:114px;width:168.9px;height:468.60px"><div class="tint" style="top:-6px;height:96px"></div><div class="tint" style="top:128px;height:106px;opacity:.65"></div><div class="row" style="top:2.90px"><span class="lb" style="left:15.8px">Cut</span><span class="sc" style="right:7.9px">⌘X</span></div><div class="row" style="top:16.90px"><span class="lb" style="left:15.8px">Copy</span><span class="sc" style="right:7.9px">⌘C</span></div><div class="row" style="top:30.90px"><span class="lb" style="left:15.8px">Paste</span><span class="sc" style="right:7.9px">⌘V</span></div><div class="row" style="top:44.90px"><span class="lb" style="left:15.8px">Paste Into</span><span class="sc" style="right:7.9px"><span class="op">⌥</span>⌘V</span></div><div class="row" style="top:58.90px"><span class="lb" style="left:15.8px">Paste in Place</span><span class="sc" style="right:7.9px"><span class="op">⌥</span><span class="sh">⇧</span>⌘V</span></div><div class="row" style="top:72.90px"><span class="lb" style="left:15.8px">Search Adobe Stock...</span></div><div class="sep" style="top:90.83px"></div><div class="row" style="top:95.75px"><span class="lb" style="left:15.8px">Zoom</span><i class="arr"></i></div><div class="sep" style="top:113.67px"></div><div class="row hl" style="top:118.60px"><span class="lb" style="left:15.8px">Transform</span><i class="arr"></i></div><div class="row" style="top:132.60px"><span class="lb" style="left:15.8px">Transform Again</span><i class="arr"></i></div><div class="row" style="top:146.60px"><span class="lb" style="left:15.8px">Arrange</span><i class="arr"></i></div><div class="row" style="top:160.60px"><span class="lb" style="left:15.8px">Select</span><i class="arr"></i></div><div class="sep" style="top:178.53px"></div><div class="row" style="top:183.45px"><span class="lb" style="left:15.8px">Lock</span><span class="sc" style="right:7.9px">⌘L</span></div><div class="row" style="top:197.45px"><span class="lb" style="left:15.8px">Hide</span><span class="sc" style="right:7.9px">⌘3</span></div><div class="row" style="top:211.45px"><span class="lb" style="left:15.8px">Stroke Weight</span><i class="arr"></i></div><div class="sep" style="top:229.38px"></div><div class="row" style="top:234.30px"><span class="lb" style="left:15.8px">Fitting</span><i class="arr"></i></div><div class="sep" style="top:252.22px"></div><div class="row" style="top:257.15px"><span class="lb" style="left:15.8px">Effects</span><i class="arr"></i></div><div class="row" style="top:271.15px"><span class="lb" style="left:15.8px">Captions</span><i class="arr"></i></div><div class="row" style="top:285.15px"><span class="lb" style="left:15.8px">Edit Original</span></div><div class="row" style="top:299.15px"><span class="lb" style="left:15.8px">Edit With</span><i class="arr"></i></div><div class="row" style="top:313.15px"><span class="lb" style="left:15.8px">Hyperlinks</span><i class="arr"></i></div><div class="row" style="top:327.15px"><span class="lb" style="left:15.8px">Interactive</span><i class="arr"></i></div><div class="row" style="top:341.15px"><span class="lb" style="left:15.8px">Generate QR Code...</span></div><div class="row" style="top:355.15px"><span class="lb" style="left:15.8px">Object Export Options...</span></div><div class="sep" style="top:373.07px"></div><div class="row" style="top:378.00px"><span class="lb" style="left:15.8px">Tag Frame</span><i class="arr"></i></div><div class="row" style="top:392.00px"><span class="lb" style="left:15.8px">Autotag</span></div><div class="sep" style="top:409.93px"></div><div class="row" style="top:414.85px"><span class="lb" style="left:15.8px">Display Performance</span><i class="arr"></i></div><div class="sep" style="top:432.78px"></div><div class="row" style="top:437.70px"><span class="lb" style="left:15.8px">InCopy</span><i class="arr"></i></div><div class="row" style="top:451.70px"><span class="lb" style="left:15.8px">Graphics</span><i class="arr"></i></div></div>
<div class="menu m2" style="left:655.2px;top:229.5px;width:145.8px;height:172.95px"><div class="row" style="top:3.20px"><span class="lb" style="left:15.5px">Move...</span><span class="sc" style="right:5.3px"><span class="sh">⇧</span>⌘M</span></div><div class="row" style="top:17.20px"><span class="lb" style="left:15.5px">Scale...</span></div><div class="row" style="top:31.20px"><span class="lb" style="left:15.5px">Rotate...</span></div><div class="row" style="top:45.20px"><span class="lb" style="left:15.5px">Shear...</span></div><div class="sep" style="top:63.12px"></div><div class="row" style="top:68.05px"><span class="lb" style="left:15.5px">Rotate 90° CW</span></div><div class="row" style="top:82.05px"><span class="lb" style="left:15.5px">Rotate 90° CCW</span></div><div class="row hl2" style="top:96.05px"><span class="lb" style="left:15.5px">Rotate 180°</span></div><div class="sep" style="top:113.97px"></div><div class="row" style="top:118.90px"><span class="lb" style="left:15.5px">Flip Horizontal</span></div><div class="row" style="top:132.90px"><span class="lb" style="left:15.5px">Flip Vertical</span></div><div class="sep" style="top:150.82px"></div><div class="row" style="top:155.75px"><span class="lb" style="left:15.5px">Clear Transformations</span></div></div>
</body></html>
